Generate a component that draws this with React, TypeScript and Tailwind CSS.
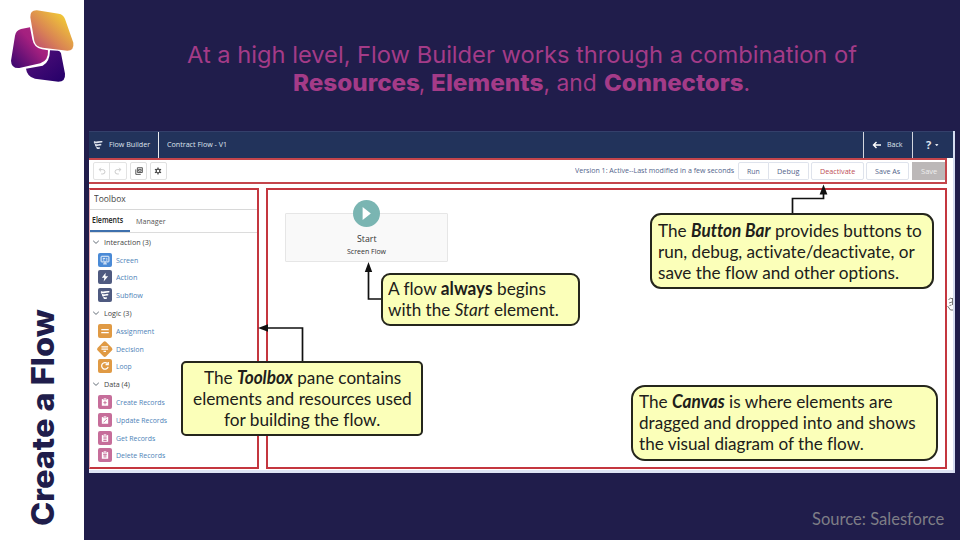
import { useLayoutEffect, useRef, type ReactNode } from "react";

/** Keeps one line of text at an exact width, whatever font is available. */
function Fit({ w, className = "", children }: { w: number; className?: string; children: ReactNode }) {
  const outer = useRef<HTMLSpanElement>(null);
  const inner = useRef<HTMLSpanElement>(null);
  useLayoutEffect(() => {
    const o = outer.current;
    const i = inner.current;
    if (!o || !i) return;
    o.style.width = `${w}px`;
    i.style.transform = `scaleX(${w / i.offsetWidth})`;
  }, [w]);
  return (
    <span ref={outer} className={`block shrink-0 whitespace-nowrap ${className}`}>
      <span ref={inner} className="inline-block origin-left align-top">{children}</span>
    </span>
  );
}

function Logo() {
  return (
    <svg viewBox="0 0 252 300" className="h-[100px] w-[84px]">
      <defs>
        <linearGradient id="gold" x1="0" y1="1" x2="1" y2="0">
          <stop offset="0" stopColor="#b83f78" />
          <stop offset="0.4" stopColor="#d98354" />
          <stop offset="0.85" stopColor="#f2cc35" />
        </linearGradient>
        <linearGradient id="pink" x1="0" y1="1" x2="1" y2="0">
          <stop offset="0" stopColor="#35056f" />
          <stop offset="0.6" stopColor="#a4207f" />
          <stop offset="1" stopColor="#ad2a80" />
        </linearGradient>
        <linearGradient id="violet" x1="0" y1="0" x2="1" y2="1">
          <stop offset="0" stopColor="#55107a" />
          <stop offset="1" stopColor="#240069" />
        </linearGradient>
      </defs>
      <path fill="url(#violet)" d="M78 206 L128 197 Q149 188 150 151 L174 152 Q181 153 183 160 L195 221 Q197 245 175 245 L105 236 Q81 230 78 206Z" />
      <path fill="url(#pink)" d="M45 107 Q48 91 63 87 L90 82 L97 118 Q102 144 126 148 L144 151 Q146 182 121 190 L58 204 Q34 206 33 182Z" />
      <path fill="url(#gold)" d="M91 52 Q90 30 111 31 L176 41 Q190 43 195 57 L220 128 Q223 152 202 152 L128 143 Q108 141 103 123Z" />
    </svg>
  );
}

function FlowMark({ className }: { className: string }) {
  return (
    <svg viewBox="0 0 12 12" className={className} fill="none" stroke="currentColor" strokeWidth="1.9" strokeLinecap="round">
      <path d="M1.800 2.500c2.500 1.100 4.500-.7 8.700-.4M3.200 5.900c2 .9 3.400-.5 6-.3M5 9.400c1 .8 1.600.3 2.600.2" />
      <path strokeWidth="1" d="M1.800 2.500c0 1.500.5 2.800 1.400 3.400M3.200 5.900c.2 1.700.8 2.900 1.800 3.500" />
    </svg>
  );
}

function Glyph({ name }: { name: string }) {
  if (name === "flow") return <FlowMark className="h-2.5 w-2.5 text-white" />;
  const clip = (inner: ReactNode) => (
    <>
      <path d="M2.200 2.500h7.600v8H2.200z" fill="#fff" />
      <path d="M4.200 1.300h3.600v2H4.200z" fill="#fff" stroke="#c66d9a" strokeWidth=".6" />
      <g stroke="#c66d9a" strokeWidth="1.1" fill="none">{inner}</g>
    </>
  );
  return (
    <svg viewBox="0 0 12 12" className="h-2.5 w-2.5" fill="none">
      {name === "screen" && (
        <g stroke="#fff" strokeWidth="1.1">
          <rect x="1.3" y="1.5" width="9.4" height="6.8" rx=".8" />
          <path d="M3.300 4h3M3.300 6h2M7.500 4h1.300M7 6h2M6 8v2.600M3.800 10.700h4.400" />
        </g>
      )}
      {name === "bolt" && <path d="M6.800.8 2.200 6.800h3L4.400 11.400 9.800 5H6.500z" fill="#fff" />}
      {name === "equal" && <path d="M1.500 4.300h9M1.500 8h9" stroke="#fff" strokeWidth="1.6" />}
      {name === "decision" && <path d="M2 3.300h8M2 6h8M4.500 8.700h3" stroke="#fff" strokeWidth="1.5" />}
      {name === "loop" && <path d="M9.800 7A4 4 0 1 1 8.900 3.100M9.900 1.100v3.200H6.700" stroke="#fff" strokeWidth="1.5" />}
      {name === "create" && clip(<path d="M6 4.800v4M4 6.800h4" />)}
      {name === "update" && clip(<path d="M4.200 8.800 8.200 4.800" />)}
      {name === "get" && clip(<path d="M4 5h4M4 7h4M4 9h4" />)}
      {name === "delete" && clip(<path d="M3.800 5.100h4.400M5 5v4.200M7 5v4.200" />)}
    </svg>
  );
}

function Item({ icon, bg, w, children }: { icon: string; bg: string; w: number; children: string }) {
  return (
    <div className="flex h-[17.8px] items-center pl-[8px]">
      <span className="flex h-[14px] w-[14px] items-center justify-center">
        <span className={`flex items-center justify-center ${bg}`}>
          <span className={icon === "decision" ? "-rotate-45" : ""}>
            <Glyph name={icon} />
          </span>
        </span>
      </span>
      <Fit w={w} className="ml-1 text-[8px] text-[#4e83b8]">{children}</Fit>
    </div>
  );
}

function Group({ w, children }: { w: number; children: string }) {
  return (
    <div className="flex h-[17.8px] items-center pl-[2px]">
      <svg viewBox="0 0 8 8" className="h-2 w-2" fill="none" stroke="#66707a">
        <path d="m1.200 2.800 2.800 2.600L6.800 2.800" />
      </svg>
      <Fit w={w} className="ml-[4px] text-[8px] text-[#444]">{children}</Fit>
    </div>
  );
}

function Button({ box, w, children }: { box: string; w: number; children: string }) {
  return (
    <div className={`flex h-[18px] items-center justify-center border text-[8px] ${box}`}>
      <Fit w={w}>{children}</Fit>
    </div>
  );
}

const callout = "absolute border-2 border-[#25261c] bg-[#fbffb9] font-['Lato',sans-serif] text-[18px] leading-[21px] text-[#20201a] [font-variant-ligatures:none]";
const blue = "h-[14px] w-[14px] rounded-[2px] bg-[#4a8ad6]";
const slate = "h-[14px] w-[14px] rounded-[2px] bg-[#4f5a80]";
const orange = "h-[14px] w-[14px] rounded-[2px] bg-[#e09a44]";
const diamond = "h-[11.5px] w-[11.5px] rotate-45 rounded-[2px] bg-[#e09a44]";
const rose = "h-[14px] w-[14px] rounded-[2px] bg-[#c66d9a]";

export default function App() {
  return (
    <div className="relative flex h-[540px] w-[960px] overflow-hidden bg-[#201d4b] font-['Open_Sans','Noto_Sans',sans-serif]">
      <aside className="flex w-[84px] shrink-0 flex-col justify-between bg-white">
        <Logo />
        <div className="mb-[14px] flex h-[216px] items-center justify-center pl-[2px]">
          <div className="w-[216px] shrink-0 -rotate-90 font-['Inter',sans-serif] text-[31px] leading-[40px] font-extrabold text-[#201d4b]">
            <Fit w={217}>Create a Flow</Fit>
          </div>
        </div>
      </aside>

      <main className="flex w-[876px] flex-col">
        <h1 className="flex h-[131px] flex-col pt-[41px] font-['Inter',sans-serif] text-[22.8px] leading-[28px] text-[#a43b88]">
          <Fit w={670} className="ml-[102.5px]">At a high level, Flow Builder works through a combination of</Fit>
          <span className="ml-[208.5px] flex">
            <Fit w={126.5} className="font-extrabold">Resources</Fit>
            <Fit w={12}>,&nbsp;</Fit>
            <Fit w={112.5} className="font-extrabold">Elements</Fit>
            <Fit w={60}>, and&nbsp;</Fit>
            <Fit w={140} className="font-extrabold">Connectors</Fit>
            <span>.</span>
          </span>
        </h1>

        <section className="ml-[5px] flex h-[342px] w-[866px] flex-col border-r-2 border-[#d5dcf0] bg-white">
          <header className="flex h-[27px] items-stretch border-t border-[#34406b] bg-[#22335b] text-[7.5px] text-[#dfe4ee]">
            <div className="flex w-[70px] items-center border-r border-white/90">
              <FlowMark className="ml-1 h-2.5 w-2.5" />
              <Fit w={41} className="ml-[6px]">Flow Builder</Fit>
            </div>
            <div className="flex flex-1 items-center pl-2">
              <Fit w={60}>Contract Flow - V1</Fit>
            </div>
            <div className="flex w-[49px] items-center border-l border-white/80 pl-[8px]">
              <svg viewBox="0 0 10 10" className="h-2.5 w-2.5" fill="none" stroke="#fff" strokeWidth="1.4">
                <path d="M9 5H1.500M4.500 2 1.500 5l3 3" />
              </svg>
              <Fit w={16} className="ml-[5px]">Back</Fit>
            </div>
            <div className="flex w-[41px] items-center border-l border-white/80 pl-[13px]">
              <span className="text-[11px] font-bold">?</span>
              <svg viewBox="0 0 4 3" className="ml-[4px] h-[2.5px] w-[3.5px]" fill="#dfe4ee">
                <path d="M0 0h4L2 3z" />
              </svg>
            </div>
          </header>

          <div className="mr-[6px] flex h-[26px] items-center border-2 border-l-0 border-[#c4454b] bg-white pl-[4px] text-[#53648b]">
            <div className="flex h-[18px] w-[34px] rounded-[2px] border border-[#e3e3e3]">
              <div className="flex w-[17px] items-center justify-center border-r border-[#e3e3e3]">
                <svg viewBox="0 0 10 10" className="h-2 w-2" fill="none" stroke="#c9c9c9" strokeWidth="1.2">
                  <path d="M3.500 1 1.500 3.300 3.800 5.500M1.800 3.300H6a2.700 2.700 0 0 1 0 5.400H4" />
                </svg>
              </div>
              <div className="flex w-[17px] items-center justify-center">
                <svg viewBox="0 0 10 10" className="h-2 w-2" fill="none" stroke="#c9c9c9" strokeWidth="1.2">
                  <path d="M6.500 1 8.500 3.300 6.200 5.500M8.200 3.300H4a2.700 2.700 0 0 0 0 5.400h2" />
                </svg>
              </div>
            </div>
            <div className="ml-[3px] flex h-[18px] w-[17px] items-center justify-center rounded-[2px] border border-[#e0e0e0]">
              <svg viewBox="0 0 10 10" className="h-2 w-2" fill="none" stroke="#555" strokeWidth="1.2">
                <path d="M3 .9h6.200v6H3zM1 3v6.200h6.200M4.500 3h3.200v2.200H4.500z" />
              </svg>
            </div>
            <div className="ml-[2.5px] flex h-[18px] w-[17px] items-center justify-center rounded-[2px] border border-[#e0e0e0]">
              <svg viewBox="0 0 10 10" className="h-2 w-2" fill="none" stroke="#484848">
                <circle cx="5" cy="5" r="2.3" strokeWidth="1.5" />
                <path strokeWidth="1.5" d="M5 .6v2M5 7.400v2M1.200 2.800l1.700 1M7.100 6.200l1.700 1M1.200 7.200l1.700-1M7.100 3.800l1.700-1" />
              </svg>
            </div>
            <Fit w={159} className="ml-auto text-[7.5px]">Version 1: Active--Last modified in a few seconds</Fit>
            <Button box="ml-[4px] w-[31px] border-[#dfe3ec] rounded-l-[2px]" w={13}>Run</Button>
            <Button box="w-[40px] border-l-0 border-[#dfe3ec] rounded-r-[2px]" w={22}>Debug</Button>
            <Button box="ml-[2.5px] w-[53px] border-[#dfe3ec] text-[#bd4e55] rounded-[2px]" w={35}>Deactivate</Button>
            <Button box="ml-[2px] w-[43px] border-[#dfe3ec] rounded-[2px]" w={25}>Save As</Button>
            <Button box="ml-[3px] w-[33px] border-[#bcb8b8] bg-[#bcb8b8] text-[#eeeeee]" w={16}>Save</Button>
          </div>

          <div className="mt-[4px] mr-[6px] flex h-[281px] gap-[7px]">
            <div className="flex w-[170px] shrink-0 flex-col border-2 border-l border-[#c4363f] border-l-[#e3a9b4]">
              <div className="flex h-[20px] items-center border-b border-[#d8d8d8] pb-[2px] pl-[4px] text-[9px] text-[#444]">
                <Fit w={32}>Toolbox</Fit>
              </div>
              <div className="flex h-[23px] items-stretch border-b border-[#dcdcdc] text-[8px] text-[#555]">
                <div className="flex w-[40px] items-center border-b-2 border-[#3e70ad] pl-[1.5px] font-semibold text-[#222]">
                  <Fit w={31.5}>Elements</Fit>
                </div>
                <Fit w={29.5} className="ml-[6px] self-center">Manager</Fit>
              </div>
              <Group w={47}>Interaction (3)</Group>
              <Item icon="screen" bg={blue} w={22}>Screen</Item>
              <Item icon="bolt" bg={slate} w={21}>Action</Item>
              <Item icon="flow" bg={slate} w={27}>Subflow</Item>
              <Group w={28}>Logic (3)</Group>
              <Item icon="equal" bg={orange} w={38.5}>Assignment</Item>
              <Item icon="decision" bg={diamond} w={28}>Decision</Item>
              <Item icon="loop" bg={orange} w={16}>Loop</Item>
              <Group w={26}>Data (4)</Group>
              <Item icon="create" bg={rose} w={49}>Create Records</Item>
              <Item icon="update" bg={rose} w={51.5}>Update Records</Item>
              <Item icon="get" bg={rose} w={39}>Get Records</Item>
              <Item icon="delete" bg={rose} w={49}>Delete Records</Item>
            </div>
            <div className="flex-1 border-2 border-[#c4363f] pt-[23px] pl-[17px]">
              <div className="relative flex h-[49px] w-[163px] flex-col items-center rounded-[1px] border border-[#e6e6e6] bg-[#f9f9f9] pt-[18px] text-[#333]">
                <svg viewBox="0 0 28 28" className="absolute -top-[14px] left-[67px] h-[27px] w-[27px]">
                  <circle cx="14" cy="14" r="14" fill="#7ab5b2" />
                  <path d="M10 7.300 18.500 14 10 20.700z" fill="#fff" />
                </svg>
                <Fit w={19.5} className="text-[9px] leading-[13px]">Start</Fit>
                <Fit w={39} className="text-[7px] leading-[13px]">Screen Flow</Fit>
              </div>
            </div>
          </div>
          <div className="mt-auto h-[3px] bg-[#dfe4f4]" />
        </section>

        <footer className="mt-[36px] flex justify-end pr-[16px] font-['Lato',sans-serif] text-[17px] leading-[20px] text-[#7e7d86]">
          <Fit w={132.5}>Source: Salesforce</Fit>
        </footer>
      </main>

      <svg viewBox="0 0 960 540" className="absolute inset-0 h-[540px] w-[960px]" fill="none" stroke="#111" strokeWidth="1.7">
        <path d="M382 299H368.500V270M302.500 362V328H267M792.500 214V198.500H823.500V193" />
        <path fill="#111" stroke="none" d="M368.500 262l3.700 10h-7.400zM258 328l10-3.700v7.400zM823.500 184.500l3.900 10h-7.800z" />
        <g stroke="#666" strokeWidth=".9">
          <path d="M948.500 300l2-2 2 1M949 303l3-1M949.500 305.500l2-.5M952.500 298v7M947.500 306l3 4h2.500" />
        </g>
      </svg>

      <div className={`${callout} top-[273px] left-[381px] h-[53px] w-[199px] rounded-[9px] pt-[3px] pl-[5px]`}>
        <Fit w={158}>A flow <b>always</b> begins</Fit>
        <Fit w={171}>with the <i>Start</i> element.</Fit>
      </div>
      <div className={`${callout} top-[361px] left-[181px] flex h-[75px] w-[242px] flex-col items-center rounded-[5px] pt-[4px]`}>
        <Fit w={197}>The <b><i>Toolbox</i></b> pane contains</Fit>
        <Fit w={219}>elements and resources used</Fit>
        <Fit w={156}>for building the flow.</Fit>
      </div>
      <div className={`${callout} top-[213px] left-[650px] h-[76px] w-[284px] rounded-[11px] pt-[5px] pl-[6px]`}>
        <Fit w={264}>The <b><i>Button Bar</i></b> provides buttons to</Fit>
        <Fit w={257}>run, debug, activate/deactivate, or</Fit>
        <Fit w={241}>save the flow and other options.</Fit>
      </div>
      <div className={`${callout} top-[385px] left-[631px] h-[76px] w-[307px] rounded-[14px] pt-[4px] pl-[6px]`}>
        <Fit w={254}>The <b><i>Canvas</i></b> is where elements are</Fit>
        <Fit w={277}>dragged and dropped into and shows</Fit>
        <Fit w={225}>the visual diagram of the flow.</Fit>
      </div>
    </div>
  );
}
